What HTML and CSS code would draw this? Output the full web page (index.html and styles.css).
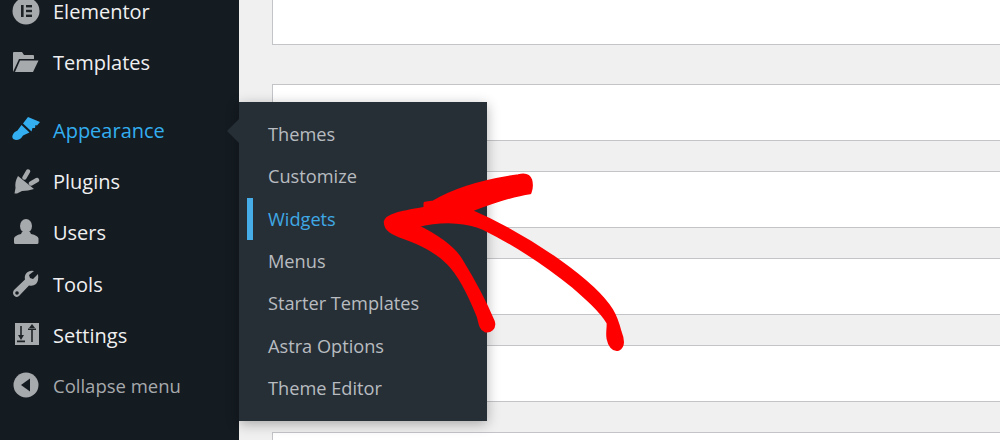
FILE: index.html
```html
<!DOCTYPE html>
<html lang="en">
<head>
<meta charset="utf-8">
<title>Appearance menu</title>
<link rel="stylesheet" href="styles.css">
</head>
<body>
<div class="page">
  <nav class="sidebar">
    <a class="item elementor"><svg class="icon" viewBox="0 0 28 28"><circle cx="14" cy="14" r="13.5" fill="#a7aaad"/><rect x="9" y="8" width="2.6" height="12" fill="#1d2327"/><rect x="14" y="8" width="6" height="2.4" fill="#1d2327"/><rect x="14" y="12.8" width="6" height="2.4" fill="#1d2327"/><rect x="14" y="17.6" width="6" height="2.4" fill="#1d2327"/></svg><span>Elementor</span></a>
    <a class="item templates"><svg class="icon" viewBox="0 0 28 28"><path d="M1 24V5q0-1 1-1h8l2 3h9q1 0 1 1v3H7L1 24z" fill="#a7aaad"/><path d="M8 12.500h18.500L21 24H3z" fill="#a7aaad"/></svg><span>Templates</span></a>
    <a class="item appearance current"><svg class="icon" viewBox="0 0 28 28"><path d="M16 1 28 6 25 9.500 23.500 9 23 12 20.500 12 19.500 15.500 11 7.500z" fill="currentColor"/><path d="M9.500 9 17.500 16.500 11 19.500Q8.500 24 4 24 -.500 23.500 .5 19.500 1.500 16 5.500 14.500z" fill="currentColor"/></svg><span>Appearance</span></a>
    <a class="item"><svg class="icon" viewBox="0 0 28 28"><path d="M6 8 22 21Q16 23 10 23L5 25.500H2.500L3.500 20Q2.500 14 6 8z" fill="#a7aaad"/><path d="M16 3.500 12.500 9.500M25 12 19 15.500" fill="none" stroke="#a7aaad" stroke-width="4.400" stroke-linecap="round"/></svg><span>Plugins</span></a>
    <a class="item"><svg class="icon" viewBox="0 0 28 28"><ellipse cx="14" cy="7" rx="6" ry="7" fill="#a7aaad"/><path d="M10 13h8l1 2q7 1.500 7.500 4.500v4q0 1.500-1.500 1.500H3.500Q2 25 2 23.500v-4Q2.500 16.500 9 15z" fill="#a7aaad"/></svg><span>Users</span></a>
    <a class="item"><svg class="icon" viewBox="0 0 28 28"><path d="M26 4l-5 5-3-1-1-3 5-4q-4-1-7 1.500-3 3-2 7L2 20q-2 3 0 5.500t5 .5l10-10.500q4 1 7-1.500 3-3 2-10z" fill="#a7aaad"/><circle cx="5" cy="23" r="1.800" fill="#141b21"/></svg><span>Tools</span></a>
    <a class="item"><svg class="icon" viewBox="0 0 28 28"><rect x="3" y="2" width="24" height="22" fill="#a7aaad"/><path d="M8.200 5h1.600v9h2.200l-3 5-3-5h2.200zM5 19.500h8v1.700H5zM19.200 9h1.600v12h-1.600zM16 7.500h8V9h-8zM20 3l3 4h-6z" fill="#1d2327"/></svg><span>Settings</span></a>
    <a class="item collapse"><svg class="icon" viewBox="0 0 28 28"><circle cx="14" cy="14" r="12.500" fill="#a7aaad"/><path d="M18 7.500v13L9 14z" fill="#141b21"/></svg><span>Collapse menu</span></a>
  </nav>
  <main class="content">
    <div class="panel first"></div>
    <div class="panel second"></div>
    <div class="panel"></div>
    <div class="panel"></div>
    <div class="panel"></div>
    <div class="panel"></div>
  </main>
  <div class="flyout">
    <a class="sub">Themes</a>
    <a class="sub">Customize</a>
    <a class="sub active">Widgets</a>
    <a class="sub">Menus</a>
    <a class="sub">Starter Templates</a>
    <a class="sub">Astra Options</a>
    <a class="sub">Theme Editor</a>
  </div>
  <svg class="scribble" viewBox="0 0 810 600"><path d="M445 47C465 42 478 48 482 60 486 75 484 88 480 98 430 105 370 125 300 152 400 195 500 255 570 305 640 355 700 410 725 450 740 475 745 495 750 515 760 540 762 560 745 568 728 572 718 555 714 535 711 515 716 500 714 488 690 450 650 415 610 380 530 315 430 250 340 205 300 188 230 175 140 198 200 225 250 265 270 295 310 360 345 425 370 485 376 505 360 515 345 512 332 508 330 490 325 470 305 420 270 345 235 310 195 270 150 250 100 232 70 222 45 210 46 185 50 165 90 158 165 145L165 130 190 126C250 90 340 62 445 47Z"/></svg>
</div>
</body>
</html>
```

FILE: styles.css
```css
* { box-sizing: border-box; }
html, body { margin: 0; height: 100%; }
body { font-family: "Open Sans", "Noto Sans", "Liberation Sans", sans-serif; background: #f0f0f1; overflow: hidden; }
.page { position: relative; display: flex; width: 1000px; height: 440px; overflow: hidden; }
.sidebar { width: 239px; flex: none; height: 100%; background: #141b21; display: flex; flex-direction: column; }
.item { display: flex; align-items: center; gap: 13px; height: 51.200px; padding-left: 12px; font-size: 20px; color: #f0f0f1; }
.item .icon { width: 28px; height: 28px; flex: none; }
.elementor { margin-top: -14.500px; }
.templates { margin-bottom: 17px; }
.appearance.current { color: #33aef0; }
.collapse { color: #a7aaad; font-size: 18.500px; margin-top: -1px; }
.content { flex: 1; padding-left: 33px; display: flex; flex-direction: column; }
.panel { flex: none; height: 57px; margin-bottom: 30px; background: #fff; border: 1px solid #c3c4c7; border-right: 0; }
.panel.first { height: 45px; margin-bottom: 39px; border-top: 0; }
.flyout { position: absolute; left: 239px; top: 102px; width: 248px; height: 319px; padding-top: 11px; background: #272f36; box-shadow: 0 3px 12px rgba(0, 0, 0, .3); }
.flyout::before { content: ""; position: absolute; left: -12px; top: 17px; border: 12px solid transparent; border-left: 0; border-right-color: #272f36; }
.sub { display: flex; align-items: center; height: 42.300px; padding-left: 29px; font-size: 18.200px; color: #b8bcc0; position: relative; }
.sub.active { color: #3fa9e6; }
.sub.active::before { content: ""; position: absolute; left: 8px; top: 0; bottom: 0; width: 6px; background: #46ade8; }
.scribble { position: absolute; left: 370px; top: 160px; width: 270px; height: 200px; fill: #f00; stroke: #f00; stroke-width: 9; stroke-linejoin: round; }
```
